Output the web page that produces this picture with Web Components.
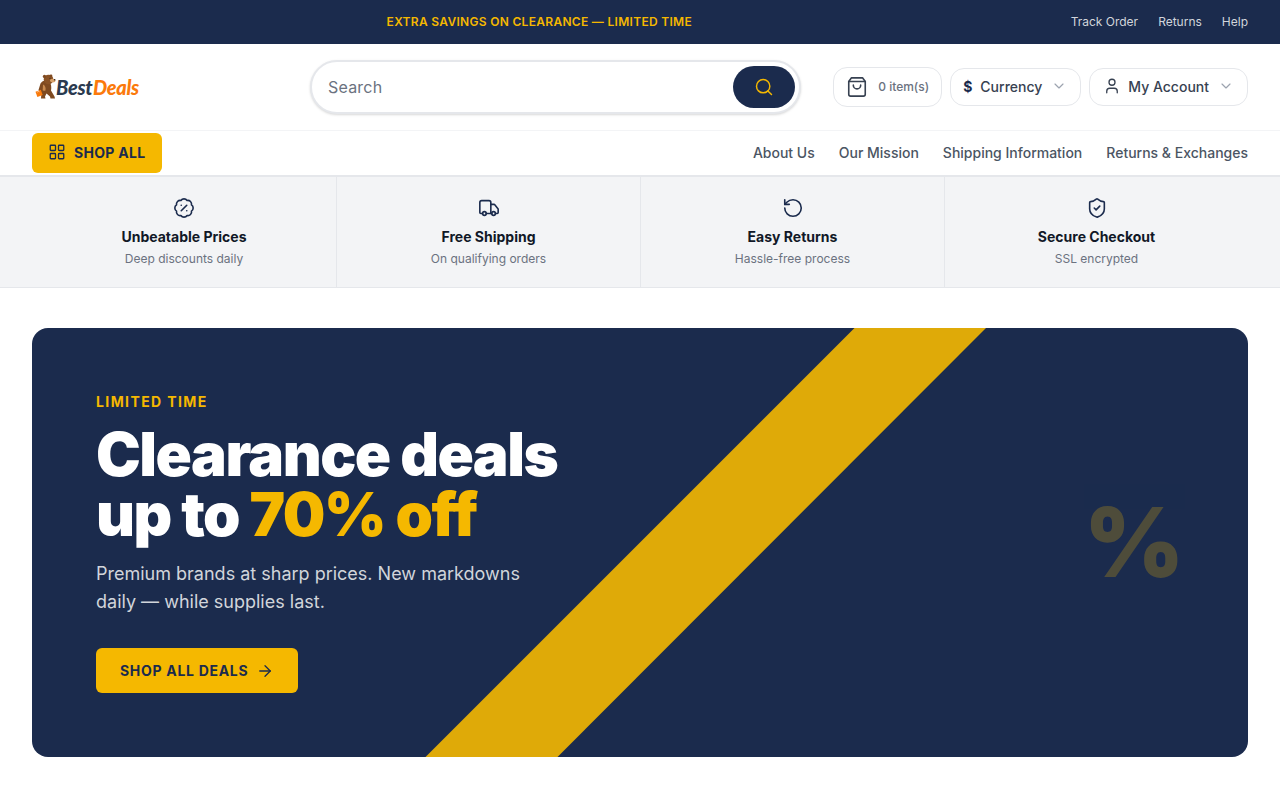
<!DOCTYPE html>
<html lang="en">
<head>
<meta charset="utf-8">
<title>BestDeals</title>
<style>
  html, body { margin: 0; padding: 0; background: #fff; }
  body { font-family: Inter, "Liberation Sans", sans-serif; color: #111827; }
</style>
</head>
<body>
<promo-bar></promo-bar>
<site-header></site-header>
<site-nav></site-nav>
<feature-strip>
  <feature-item icon="badge" title="Unbeatable Prices" text="Deep discounts daily"></feature-item>
  <feature-item icon="truck" title="Free Shipping" text="On qualifying orders"></feature-item>
  <feature-item icon="undo" title="Easy Returns" text="Hassle-free process"></feature-item>
  <feature-item icon="shield" title="Secure Checkout" text="SSL encrypted"></feature-item>
</feature-strip>
<hero-banner></hero-banner>

<script>
const ICONS = {
  search: '<circle cx="11" cy="11" r="8"/><path d="m21 21-4.3-4.3"/>',
  bag: '<path d="M6 2 3 6v14a2 2 0 0 0 2 2h14a2 2 0 0 0 2-2V6l-3-4Z"/><path d="M3 6h18"/><path d="M16 10a4 4 0 0 1-8 0"/>',
  chevron: '<path d="m6 9 6 6 6-6"/>',
  user: '<path d="M19 21v-2a4 4 0 0 0-4-4H9a4 4 0 0 0-4 4v2"/><circle cx="12" cy="7" r="4"/>',
  grid: '<rect width="7" height="7" x="3" y="3" rx="1"/><rect width="7" height="7" x="14" y="3" rx="1"/><rect width="7" height="7" x="14" y="14" rx="1"/><rect width="7" height="7" x="3" y="14" rx="1"/>',
  badge: '<path d="M3.85 8.62a4 4 0 0 1 4.78-4.77 4 4 0 0 1 6.74 0 4 4 0 0 1 4.78 4.78 4 4 0 0 1 0 6.74 4 4 0 0 1-4.77 4.78 4 4 0 0 1-6.75 0 4 4 0 0 1-4.78-4.77 4 4 0 0 1 0-6.76Z"/><path d="m15 9-6 6"/><path d="M9 9h.01"/><path d="M15 15h.01"/>',
  truck: '<path d="M14 18V6a2 2 0 0 0-2-2H4a2 2 0 0 0-2 2v11a1 1 0 0 0 1 1h2"/><path d="M15 18H9"/><path d="M19 18h2a1 1 0 0 0 1-1v-3.65a1 1 0 0 0-.22-.624l-3.48-4.35A1 1 0 0 0 17.52 8H14"/><circle cx="17" cy="18" r="2"/><circle cx="7" cy="18" r="2"/>',
  undo: '<path d="M3 12a9 9 0 1 0 9-9 9.75 9.75 0 0 0-6.74 2.74L3 8"/><path d="M3 3v5h5"/>',
  shield: '<path d="M20 13c0 5-3.5 7.5-7.66 8.95a1 1 0 0 1-.67-.01C7.5 20.5 4 18 4 13V6a1 1 0 0 1 1-1c2 0 4.5-1.2 6.24-2.72a1.17 1.17 0 0 1 1.52 0C14.51 3.81 17 5 19 5a1 1 0 0 1 1 1z"/><path d="m9 12 2 2 4-4"/>',
  arrow: '<path d="M5 12h14"/><path d="m12 5 7 7-7 7"/>'
};
const icon = (name, size, stroke = 2) =>
  `<svg width="${size}" height="${size}" viewBox="0 0 24 24" fill="none" stroke="currentColor" stroke-width="${stroke}" stroke-linecap="round" stroke-linejoin="round">${ICONS[name]}</svg>`;

class PromoBar extends HTMLElement {
  constructor() {
    super();
    this.attachShadow({ mode: 'open' });
    this.shadowRoot.innerHTML = `
      <style>
        :host { display: flex; align-items: center; height: 44px; padding: 0 32px 2px; box-sizing: border-box; background: #1b2b4d; font-size: 12px; }
        .msg { flex: 1; text-align: center; padding-right: 24px; color: #f5b800; font-weight: 600; letter-spacing: .3px; }
        nav { display: flex; gap: 20px; color: #d1d5db; }
      </style>
      <div class="msg">EXTRA SAVINGS ON CLEARANCE — LIMITED TIME</div>
      <nav><span>Track Order</span><span>Returns</span><span>Help</span></nav>`;
  }
}

class SiteLogo extends HTMLElement {
  constructor() {
    super();
    this.attachShadow({ mode: 'open' });
    this.shadowRoot.innerHTML = `
      <style>
        :host { display: flex; align-items: center; width: 112px; height: 30px; font: italic 900 20px/1 Lato, sans-serif; letter-spacing: -.3px; }
        svg { flex: none; margin-left: 3px; margin-right: -1px; }
        .best { color: #2b3a4f; }
        .deals { color: #fb7a0c; margin-left: .5px; }
      </style>
      <svg width="22" height="26" viewBox="0 0 22 26">
        <path fill="#7f4a20" d="M3.500 16l2-6.500c1.300-2 3-3 5-3l4 1c1.700 2.500 2.200 6 1.500 9l3.500 6 .5 2h-4.500l-.5-2-3.500-3-1.500 3 .5 2H6l.3-4.500C5 20 4.300 18.500 3.500 16z"/>
        <circle cx="13.500" cy="5.500" r="4.800" fill="#8a5225"/>
        <circle cx="9.500" cy="2.400" r="1.700" fill="#7f4a20"/>
        <circle cx="16" cy="1.900" r="1.400" fill="#7f4a20"/>
        <ellipse cx="17.800" cy="6.600" rx="2.800" ry="1.900" fill="#d9a26a"/>
        <circle cx="19.600" cy="5.800" r=".8" fill="#2b2018"/>
        <circle cx="15" cy="4.300" r=".55" fill="#2b2018"/>
        <path fill="#c98a4e" d="M8 10.500c2 .8 3 3 2.500 6-.8.500-2 .5-2.800-.2z"/>
        <path fill="#f97a0c" d="M.5 17.700l5.300-1.900 1.900 5.300-5.300 1.900z"/>
        <path fill="none" stroke="#fff" stroke-width=".7" d="M2.500 18.300c.2-1 1.400-1.500 1.900-.6"/>
      </svg>
      <span class="best">Best</span><span class="deals">Deals</span>`;
  }
}

class SearchBox extends HTMLElement {
  constructor() {
    super();
    this.attachShadow({ mode: 'open' });
    this.shadowRoot.innerHTML = `
      <style>
        :host { display: flex; align-items: center; box-sizing: border-box; width: 491px; height: 54px; padding: 0 4px 0 16px; background: #fff; border: 2px solid #e5e7eb; border-radius: 27px; box-shadow: 0 1px 3px rgba(0,0,0,.1), 0 1px 2px rgba(0,0,0,.06); }
        span { flex: 1; font-size: 16px; color: #6b7280; letter-spacing: .2px; }
        button { display: flex; align-items: center; justify-content: center; width: 62px; height: 42px; padding: 0; border: 0; border-radius: 21px; background: #1b2b4d; color: #f5b800; }
      </style>
      <span>Search</span>
      <button>${icon('search', 20, 1.75)}</button>`;
  }
}

class PillButton extends HTMLElement {
  constructor() {
    super();
    this.attachShadow({ mode: 'open' });
    this.shadowRoot.innerHTML = `
      <style>
        :host { display: flex; align-items: center; gap: 8px; box-sizing: border-box; height: 38px; padding: 0 13px 2px; background: #fff; border: 1px solid #e5e7eb; border-radius: 14px; font-size: 14px; font-weight: 500; color: #374151; }
        .chev { display: flex; margin-left: 1px; color: #9ca3af; }
        ::slotted(*) { display: flex; }
      </style>
      <slot name="lead"></slot><slot></slot>
      <span class="chev">${icon('chevron', 16, 1.75)}</span>`;
  }
}

class CartButton extends HTMLElement {
  constructor() {
    super();
    this.attachShadow({ mode: 'open' });
    this.shadowRoot.innerHTML = `
      <style>
        :host { display: flex; align-items: center; gap: 10px; box-sizing: border-box; height: 40px; padding: 0 12px 0 12px; background: #fff; border: 1px solid #e5e7eb; border-radius: 14px; color: #374151; }
        svg { display: block; }
        span { margin-top: -1px; font-size: 12px; font-weight: 500; color: #6b7280; }
      </style>
      ${icon('bag', 22, 1.75)}<span>0 item(s)</span>`;
  }
}

class SiteHeader extends HTMLElement {
  constructor() {
    super();
    this.attachShadow({ mode: 'open' });
    this.shadowRoot.innerHTML = `
      <style>
        :host { display: flex; align-items: center; box-sizing: border-box; height: 87px; padding: 0 32px; background: #fff; border-bottom: 1px solid #f3f4f6; }
        search-box { margin-left: 166px; }
        .actions { display: flex; align-items: center; gap: 8px; margin-left: auto; }
        .dollar { color: #1b2b4d; font-weight: 700; font-size: 14px; margin-left: -1px; }
        .who { color: #374151; margin-right: -1px; }
      </style>
      <site-logo></site-logo>
      <search-box></search-box>
      <div class="actions">
        <cart-button></cart-button>
        <pill-button><span slot="lead" class="dollar">$</span>Currency</pill-button>
        <pill-button><span slot="lead" class="who">${icon('user', 18, 1.75)}</span>My Account</pill-button>
      </div>`;
  }
}

class SiteNav extends HTMLElement {
  constructor() {
    super();
    this.attachShadow({ mode: 'open' });
    this.shadowRoot.innerHTML = `
      <style>
        :host { display: flex; align-items: center; justify-content: space-between; box-sizing: border-box; height: 46px; padding: 0 32px; background: #fff; border-bottom: 2px solid #e5e7eb; }
        button { display: flex; align-items: center; gap: 8px; height: 40px; margin: 0; padding: 0 17px 2px 16px; border: 0; border-radius: 6px; background: #f5b800; color: #1b2b4d; font: 700 14px Inter, sans-serif; letter-spacing: .3px; }
        nav { display: flex; gap: 24px; margin-top: -2px; font-size: 14px; font-weight: 500; color: #4b5563; }
      </style>
      <button>${icon('grid', 18, 1.75)}SHOP ALL</button>
      <nav><span>About Us</span><span>Our Mission</span><span>Shipping Information</span><span>Returns &amp; Exchanges</span></nav>`;
  }
}

class FeatureStrip extends HTMLElement {
  constructor() {
    super();
    this.attachShadow({ mode: 'open' });
    this.shadowRoot.innerHTML = `
      <style>
        :host { display: grid; height: 111px; box-sizing: border-box; padding-left: 32px; grid-template-columns: 305px 304px 304px 1fr; background: #f3f4f6; border-bottom: 1px solid #e5e7eb; }
      </style>
      <slot></slot>`;
  }
}

class FeatureItem extends HTMLElement {
  constructor() {
    super();
    this.attachShadow({ mode: 'open' });
    this.shadowRoot.innerHTML = `
      <style>
        :host { display: flex; flex-direction: column; align-items: center; box-sizing: border-box; padding-top: 20px; border-right: 1px solid #e5e7eb; }
        :host(:last-child) { border-right: 0; padding-right: 32px; }
        svg { display: block; color: #1b2b4d; }
        .t { margin-top: 8px; font-size: 14px; line-height: 20px; font-weight: 700; color: #111827; }
        .s { margin-top: 4px; font-size: 12px; line-height: 16px; color: #6b7280; }
      </style>
      ${icon(this.getAttribute('icon'), 22, 1.75)}
      <div class="t">${this.getAttribute('title')}</div>
      <div class="s">${this.getAttribute('text')}</div>`;
  }
}

class HeroBanner extends HTMLElement {
  constructor() {
    super();
    this.attachShadow({ mode: 'open' });
    this.shadowRoot.innerHTML = `
      <style>
        :host { display: block; position: relative; overflow: hidden; box-sizing: border-box; height: 429px; margin: 40px 32px 0; padding: 64px; background: #1b2b4d; border-radius: 16px; }
        .stripe { position: absolute; inset: 0; background: #dfaa08; clip-path: polygon(822.5px 0, 954px 0, 525.500px 429px, 393.500px 429px); }
        .pct { position: absolute; left: 1052px; top: 154px; font-size: 96px; line-height: 120px; font-weight: 900; color: #f5b800; opacity: .23; }
        .content { position: relative; }
        .eyebrow { font-size: 14px; line-height: 20px; font-weight: 700; letter-spacing: 1.4px; color: #f5b800; }
        h1 { margin: 12px 0 0; font-size: 60px; line-height: 60px; font-weight: 900; letter-spacing: -1.5px; color: #fff; }
        h1 em { font-style: normal; color: #f5b800; }
        p { margin: 16px 0 0; width: 448px; font-size: 18px; line-height: 28px; color: #d1d5db; }
        a { display: inline-flex; align-items: center; gap: 8px; height: 45px; margin-top: 32px; padding: 0 24px; border-radius: 6px; background: #f5b800; color: #1b2b4d; font-size: 14px; font-weight: 700; letter-spacing: .7px; }
      </style>
      <div class="stripe"></div>
      <div class="pct">%</div>
      <div class="content">
        <div class="eyebrow">LIMITED TIME</div>
        <h1>Clearance deals<br>up to <em>70% off</em></h1>
        <p>Premium brands at sharp prices. New markdowns daily — while supplies last.</p>
        <a>SHOP ALL DEALS ${icon('arrow', 18, 1.75)}</a>
      </div>`;
  }
}

customElements.define('promo-bar', PromoBar);
customElements.define('site-logo', SiteLogo);
customElements.define('search-box', SearchBox);
customElements.define('pill-button', PillButton);
customElements.define('cart-button', CartButton);
customElements.define('site-header', SiteHeader);
customElements.define('site-nav', SiteNav);
customElements.define('feature-strip', FeatureStrip);
customElements.define('feature-item', FeatureItem);
customElements.define('hero-banner', HeroBanner);
</script>
</body>
</html>
